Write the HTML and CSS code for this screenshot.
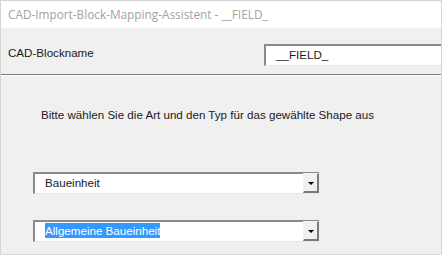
FILE: index.html
```html
<!DOCTYPE html>
<html>
<head>
<meta charset="utf-8">
<link rel="stylesheet" href="styles.css">
</head>
<body>
<div class="window">
  <div class="titlebar">CAD-Import-Block-Mapping-Assistent - __FIELD_</div>
  <div class="header">
    <span class="label">CAD-Blockname</span>
    <div class="textbox">__FIELD_</div>
  </div>
  <div class="separator"></div>
  <div class="content">
    <p class="instruction">Bitte wählen Sie die Art und den Typ für das gewählte Shape aus</p>
    <div class="combo combo-first">
      <span class="combo-text">Baueinheit</span>
      <span class="combo-btn"><span class="arrow"></span></span>
    </div>
    <div class="combo combo-second">
      <span class="combo-text"><span class="selected">Allgemeine Baueinheit</span></span>
      <span class="combo-btn"><span class="arrow"></span></span>
    </div>
  </div>
</div>
</body>
</html>
```
FILE: styles.css
```css
* { box-sizing: border-box; }
html, body { margin: 0; padding: 0; background: #ffffff; }
.window {
  width: 442px;
  height: 255px;
  border: 1px solid #d4d4d4;
  border-bottom-color: #dcdcdc;
  background: #f0f0f0;
  overflow: hidden;
  font-family: "Liberation Sans", Arial, sans-serif;
  font-size: 11.6px;
  color: #1a1a1a;
}
.titlebar {
  height: 27px;
  background: #ffffff;
  color: #a3a3a3;
  font-family: "Open Sans", "Noto Sans", sans-serif;
  font-size: 11.8px;
  line-height: 27px;
  padding-left: 7px;
  white-space: nowrap;
  overflow: hidden;
}
.header {
  height: 46px;
  display: flex;
  align-items: flex-start;
  padding-top: 16px;
  padding-left: 7px;
  white-space: nowrap;
}
.label {
  width: 256px;
  line-height: 16px;
  margin-top: 1px;
}
.textbox {
  flex: 1;
  height: 22px;
  background: #ffffff;
  border-top: 2px solid #8a8a8a;
  border-left: 2px solid #8a8a8a;
  border-bottom: 1px solid #e6e6e6;
  padding-left: 10px;
  line-height: 18px;
  margin-right: -20px;
}
.separator {
  height: 2px;
  border-top: 1px solid #7d7d7d;
  border-bottom: 1px solid #ffffff;
}
.content {
  padding-top: 31px;
  padding-left: 32px;
}
.instruction {
  margin: 0 0 0 8px;
  line-height: 16px;
  white-space: nowrap;
}
.combo {
  width: 286px;
  height: 22px;
  display: flex;
  background: #ffffff;
  border-top: 2px solid #8a8a8a;
  border-left: 2px solid #8a8a8a;
  border-bottom: 1px solid #e6e6e6;
}
.combo-first { margin-top: 49px; }
.combo-second { margin-top: 26px; }
.combo-text {
  flex: 1;
  padding-left: 10px;
  line-height: 18px;
  white-space: nowrap;
}
.selected {
  background: #3399ff;
  color: #ffffff;
  padding: 1px 0;
}
.combo-btn {
  width: 16px;
  height: 20px;
  margin-top: -1px;
  background: #f0f0f0;
  border-top: 1px solid #f4f4f4;
  border-left: 1px solid #f4f4f4;
  border-right: 2px solid #7a7a7a;
  border-bottom: 2px solid #7a7a7a;
  display: flex;
  align-items: center;
  justify-content: center;
}
.arrow {
  width: 0;
  height: 0;
  border-left: 3px solid transparent;
  border-right: 3px solid transparent;
  border-top: 3px solid #000000;
  margin-top: 1px;
}
```
